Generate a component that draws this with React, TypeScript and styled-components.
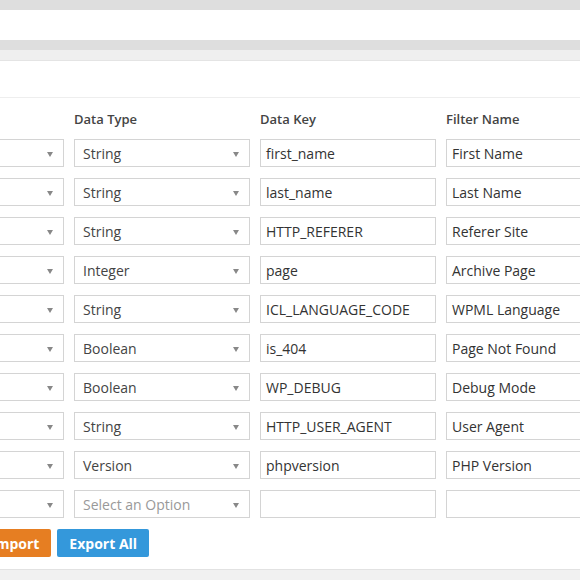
import * as React from 'react';
import styled, { createGlobalStyle } from 'styled-components';

const GlobalStyle = createGlobalStyle`
	html, body {
		margin: 0;
		padding: 0;
		background: #dedede;
		font-family: 'Open Sans', 'Liberation Sans', sans-serif;
		overflow: hidden;
	}
`;

type Row = {
	type: string;
	key: string;
	name: string;
};

const rows: Row[] = [
	{ type: 'String', key: 'first_name', name: 'First Name' },
	{ type: 'String', key: 'last_name', name: 'Last Name' },
	{ type: 'String', key: 'HTTP_REFERER', name: 'Referer Site' },
	{ type: 'Integer', key: 'page', name: 'Archive Page' },
	{ type: 'String', key: 'ICL_LANGUAGE_CODE', name: 'WPML Language' },
	{ type: 'Boolean', key: 'is_404', name: 'Page Not Found' },
	{ type: 'Boolean', key: 'WP_DEBUG', name: 'Debug Mode' },
	{ type: 'String', key: 'HTTP_USER_AGENT', name: 'User Agent' },
	{ type: 'Version', key: 'phpversion', name: 'PHP Version' },
	{ type: '', key: '', name: '' }
];

const App = () => (
	<Page>
		<GlobalStyle />
		<TopPanel />
		<Panel>
			<PanelHead />
			<PanelBody>
				<Table>
					<HeadRow>
						<Th />
						<Th>Data Type</Th>
						<Th>Data Key</Th>
						<Th>Filter Name</Th>
					</HeadRow>
					{rows.map((r, i) => (
						<DataRow key={i}>
							<Select>
								<Arrow />
							</Select>
							<Select>
								<SelectText $empty={!r.type}>{r.type || 'Select an Option'}</SelectText>
								<Arrow />
							</Select>
							<Field>{r.key}</Field>
							<Field>{r.name}</Field>
						</DataRow>
					))}
				</Table>
				<ButtonBar>
					<Button $color="#e67e22">Import</Button>
					<Button $color="#3498db">Export All</Button>
				</ButtonBar>
			</PanelBody>
		</Panel>
		<Footer />
	</Page>
);

const Page = styled.div`
	width: 580px;
	height: 580px;
	overflow: hidden;
	padding-top: 10px;
	box-sizing: border-box;
	display: flex;
	flex-direction: column;
`;

const TopPanel = styled.div`
	height: 30px;
	background: #fff;
	flex-shrink: 0;
`;

const Panel = styled.div`
	margin-top: 10px;
	background: #fff;
	flex-shrink: 0;
`;

const PanelHead = styled.div`
	height: 10px;
	background: #efefef;
	border-bottom: 1px solid #e4e4e4;
	margin-bottom: 36px;
`;

const PanelBody = styled.div`
	border-top: 1px solid #eee;
	margin-left: -112px;
	padding-bottom: 12px;
	border-bottom: 1px solid #e2e2e2;
`;

const Table = styled.div`
	display: flex;
	flex-direction: column;
	gap: 11px;
`;

const HeadRow = styled.div`
	display: grid;
	grid-template-columns: repeat(4, 176px);
	column-gap: 10px;
	height: 30px;
	align-items: end;
`;

const Th = styled.div`
	font-size: 13px;
	font-weight: 600;
	color: #444;
	line-height: 18px;
`;

const DataRow = styled.div`
	display: grid;
	grid-template-columns: repeat(4, 176px);
	column-gap: 10px;
	height: 28px;
`;

const Select = styled.div`
	position: relative;
	border: 1px solid #d4d4d4;
	box-sizing: border-box;
	height: 28px;
	padding: 0 8px;
	display: flex;
	align-items: center;
	background: #fff;
`;

const SelectText = styled.span<{ $empty?: boolean }>`
	font-size: 14px;
	color: ${p => (p.$empty ? '#999' : '#444')};
`;

const Arrow = styled.span`
	position: absolute;
	right: 10px;
	top: 12px;
	width: 0;
	height: 0;
	border-left: 3.5px solid transparent;
	border-right: 3.5px solid transparent;
	border-top: 5px solid #888;
`;

const Field = styled.div`
	border: 1px solid #d4d4d4;
	box-sizing: border-box;
	height: 28px;
	padding: 0 5px;
	display: flex;
	align-items: center;
	font-size: 14px;
	color: #333;
	white-space: nowrap;
	overflow: hidden;
`;

const ButtonBar = styled.div`
	display: flex;
	gap: 6px;
	margin-top: 11px;
	padding-left: 91px;
`;

const Button = styled.button<{ $color: string }>`
	height: 28px;
	padding: 0 12px;
	border: none;
	border-radius: 2px;
	background: ${p => p.$color};
	color: #fff;
	font-family: 'Open Sans', 'Liberation Sans', sans-serif;
	font-size: 14px;
	font-weight: 700;
	cursor: pointer;
`;

const Footer = styled.div`
	flex: 1;
	background: #f1f1f1;
`;

export default App;
